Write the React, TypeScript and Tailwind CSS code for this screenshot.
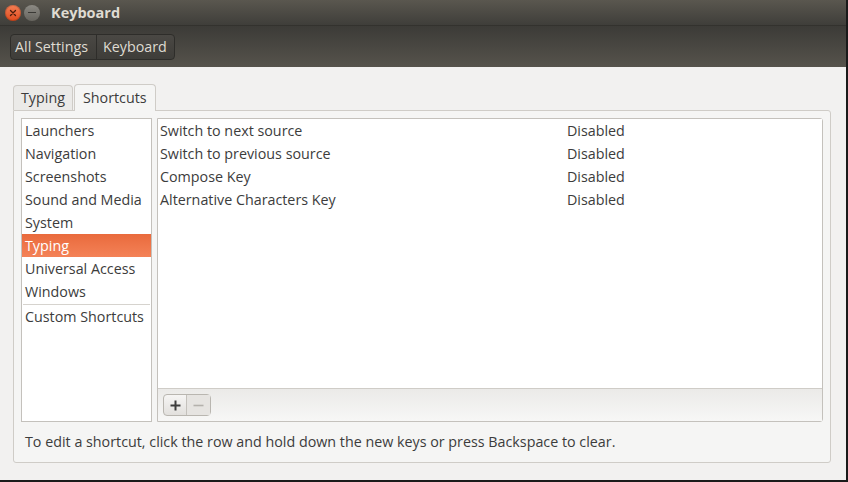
const categories = [
  'Launchers',
  'Navigation',
  'Screenshots',
  'Sound and Media',
  'System',
  'Typing',
  'Universal Access',
  'Windows'
]

const shortcuts = [
  { name: 'Switch to next source', accel: 'Disabled' },
  { name: 'Switch to previous source', accel: 'Disabled' },
  { name: 'Compose Key', accel: 'Disabled' },
  { name: 'Alternative Characters Key', accel: 'Disabled' }
]

const TitleBar = () => (
  <div className="flex h-[26px] items-center bg-gradient-to-b from-[#5a574f] to-[#3f3e3a] pl-[5px] border-b border-[#33322e]">
    <div className="flex h-[16px] w-[16px] items-center justify-center rounded-full bg-gradient-to-b from-[#f47e53] to-[#df4a1a] shadow-[inset_0_0_0_1px_rgba(0,0,0,0.15)]">
      <svg width="8" height="8" viewBox="0 0 8 8">
        <path d="M1.5 1.5 L6.5 6.5 M6.5 1.5 L1.5 6.5" stroke="#4a1d0c" strokeWidth="1.3" strokeLinecap="round" />
      </svg>
    </div>
    <div className="ml-[3px] flex h-[16px] w-[16px] items-center justify-center rounded-full bg-gradient-to-b from-[#8c8a84] to-[#66645e]">
      <div className="h-[1.5px] w-[8px] bg-[#3a3935]" />
    </div>
    <span className="ml-[11px] text-[14.5px] font-bold text-[#dfdbd2]">Keyboard</span>
  </div>
)

const Toolbar = () => (
  <div className="flex h-[41px] items-center bg-gradient-to-b from-[#3c3b37] to-[#56534c] px-[10px]">
    <div className="flex h-[26px] items-stretch rounded-[4px] border border-[#2e2d2a] bg-gradient-to-b from-[#4a4844] to-[#3e3d39] text-[14.3px] text-[#dfdbd2]">
      <span className="flex items-center border-r border-[#2e2d2a] pl-[4px] pr-[8px]">All Settings</span>
      <span className="flex items-center pl-[6px] pr-[7px]">Keyboard</span>
    </div>
  </div>
)

const Tabs = () => (
  <div className="flex items-end pl-[13px] pt-[17px] h-[43px]">
    <div className="flex h-[25px] items-center rounded-t-[4px] border border-b-0 border-[#cfccc7] bg-[#ebeae8] px-[7px] text-[14.3px]">
      Typing
    </div>
    <div className="relative -mb-px flex h-[27px] items-center rounded-t-[4px] border border-b-0 border-[#cfccc7] bg-[#f5f5f4] px-[8px] text-[14.3px] ml-[1px]">
      Shortcuts
    </div>
  </div>
)

export default function App() {
  return (
    <div className="h-[482px] w-[848px] bg-[#1a1a1a]" style={{ fontFamily: '"Open Sans", "DejaVu Sans", sans-serif' }}>
      <div className="flex h-[480px] w-[846px] flex-col bg-[#f2f1f0] text-[#3c3c3c]">
        <TitleBar />
        <Toolbar />
        <Tabs />
        <div className="ml-[13px] mr-[15px] flex h-[353px] flex-col rounded-b-[3px] rounded-tr-[3px] border border-[#cfccc7] bg-[#f5f5f4] px-[7px] pt-[7px]">
          <div className="flex h-[304px] gap-[5px]">
            <div className="flex w-[131px] flex-col border border-[#c4c1bc] bg-white">
              {categories.map(c => (
                <div
                  key={c}
                  className={
                    c === 'Typing'
                      ? 'flex h-[23px] items-center bg-gradient-to-b from-[#e96a3c] to-[#f48257] pl-[3px] text-[14.3px] text-white'
                      : 'flex h-[23px] items-center pl-[3px] text-[14.3px]'
                  }
                >
                  {c}
                </div>
              ))}
              <div className="mx-[1px] mt-[1px] h-px bg-[#d6d3ce]" />
              <div className="flex h-[23px] items-center pl-[3px] text-[14.3px]">Custom Shortcuts</div>
            </div>
            <div className="flex flex-1 flex-col rounded-r-[3px] border border-[#c4c1bc] bg-[#f2f1f0]">
              <div className="flex-1 border-b border-[#cfccc7] bg-white">
                {shortcuts.map(s => (
                  <div key={s.name} className="flex h-[23px] items-center text-[14.3px]">
                    <span className="w-[409px] pl-[2px]">{s.name}</span>
                    <span>{s.accel}</span>
                  </div>
                ))}
              </div>
              <div className="flex h-[32px] items-center bg-gradient-to-b from-[#ebeae8] to-[#f7f7f6] pl-[5px]">
                <div className="flex h-[22px] rounded-[4px] border border-[#b9b6b0] bg-gradient-to-b from-[#f6f5f4] to-[#e2e0dd]">
                  <div className="flex w-[23px] items-center justify-center border-r border-[#c4c1bc]">
                    <svg width="11" height="11" viewBox="0 0 11 11">
                      <path d="M5.5 0.5 V10.5 M0.5 5.5 H10.5" stroke="#3c3c3c" strokeWidth="2" />
                    </svg>
                  </div>
                  <div className="flex w-[23px] items-center justify-center bg-[#e6e4e1]">
                    <svg width="11" height="11" viewBox="0 0 11 11">
                      <path d="M0.5 5.5 H10.5" stroke="#b4b1ac" strokeWidth="1.6" />
                    </svg>
                  </div>
                </div>
              </div>
            </div>
          </div>
          <div className="flex h-[40px] items-center pl-[4px] text-[14.3px]">
            To edit a shortcut, click the row and hold down the new keys or press Backspace to clear.
          </div>
        </div>
      </div>
    </div>
  )
}
